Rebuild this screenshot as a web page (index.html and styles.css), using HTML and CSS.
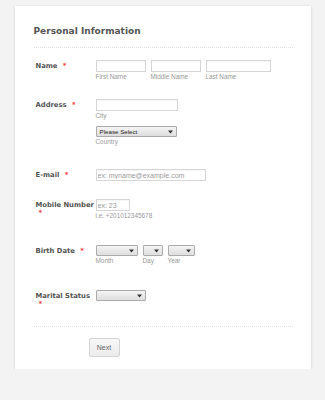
FILE: index.html
```html
<!DOCTYPE html>
<html>
<head>
<meta charset="utf-8">
<link rel="stylesheet" href="styles.css">
</head>
<body>
<div class="card">
  <h1 class="title">Personal Information</h1>
  <div class="sep sep-top"></div>

  <div class="row row-name">
    <div class="label">Name <span class="req">*</span></div>
    <div class="fields">
      <div class="group">
        <input class="input w50" type="text">
        <div class="sub">First Name</div>
      </div>
      <div class="group">
        <input class="input w50" type="text">
        <div class="sub">Middle Name</div>
      </div>
      <div class="group">
        <input class="input w65" type="text">
        <div class="sub">Last Name</div>
      </div>
    </div>
  </div>

  <div class="row row-address">
    <div class="label">Address <span class="req">*</span></div>
    <div class="stack">
      <div class="group">
        <input class="input w82" type="text">
        <div class="sub">City</div>
      </div>
      <div class="group gap-top">
        <div class="select w81"><span class="sel-text">Please Select</span><svg class="arrow" width="5" height="4" viewBox="0 0 5 4"><path d="M0 0.5h5L2.5 3.5z" fill="#333"/></svg></div>
        <div class="sub">Country</div>
      </div>
    </div>
  </div>

  <div class="row row-email">
    <div class="label">E-mail <span class="req">*</span></div>
    <div class="fields">
      <input class="input w110" type="text" placeholder="ex: myname@example.com">
    </div>
  </div>

  <div class="row row-mobile">
    <div class="label">Mobile Number <span class="req">*</span></div>
    <div class="stack">
      <input class="input w34" type="text" placeholder="ex: 23">
      <div class="sub">i.e. +201012345678</div>
    </div>
  </div>

  <div class="row row-birth">
    <div class="label">Birth Date <span class="req">*</span></div>
    <div class="fields">
      <div class="group">
        <div class="select w42"><span class="sel-text"></span><svg class="arrow" width="5" height="4" viewBox="0 0 5 4"><path d="M0 0.5h5L2.5 3.5z" fill="#333"/></svg></div>
        <div class="sub">Month</div>
      </div>
      <div class="group">
        <div class="select w20"><span class="sel-text"></span><svg class="arrow" width="5" height="4" viewBox="0 0 5 4"><path d="M0 0.5h5L2.5 3.5z" fill="#333"/></svg></div>
        <div class="sub">Day</div>
      </div>
      <div class="group">
        <div class="select w27"><span class="sel-text"></span><svg class="arrow" width="5" height="4" viewBox="0 0 5 4"><path d="M0 0.5h5L2.5 3.5z" fill="#333"/></svg></div>
        <div class="sub">Year</div>
      </div>
    </div>
  </div>

  <div class="row row-marital">
    <div class="label">Marital Status <span class="req">*</span></div>
    <div class="fields">
      <div class="select w50"><span class="sel-text"></span><svg class="arrow" width="5" height="4" viewBox="0 0 5 4"><path d="M0 0.5h5L2.5 3.5z" fill="#333"/></svg></div>
    </div>
  </div>

  <div class="sep"></div>
  <div class="actions">
    <button class="btn" type="button">Next</button>
  </div>
</div>
</body>
</html>
```
FILE: styles.css
```css
html, body {
  margin: 0;
  padding: 0;
}
body {
  background: #f3f3f3;
  font-family: "Liberation Sans", Arial, sans-serif;
  padding-top: 6px;
}
.card {
  width: 296px;
  margin: 0 auto;
  box-sizing: border-box;
  background: #fff;
  padding: 18px 18px 12px 19px;
  box-shadow: 0 1px 3px rgba(0, 0, 0, 0.12), 0 0 2px rgba(0, 0, 0, 0.05);
}
.title {
  margin: 0;
  font-family: "DejaVu Sans", Verdana, sans-serif;
  font-size: 9px;
  line-height: 14px;
  font-weight: bold;
  color: #555;
}
.sep {
  height: 0;
  border-top: 1px dotted #e2e2e2;
}
.sep-top { margin-top: 9px; }
.row {
  display: flex;
  align-items: flex-start;
  margin-bottom: 18px;
}
.row-name { margin-top: 12px; margin-bottom: 17px; }
.row-address { margin-bottom: 22px; }
.row-mobile { margin-bottom: 24px; }
.row-birth { margin-bottom: 24px; }
.label {
  width: 60px;
  flex: none;
  padding-left: 2px;
  margin-top: 2px;
  font-family: "DejaVu Sans", Verdana, sans-serif;
  font-size: 6.8px;
  line-height: 8px;
  font-weight: bold;
  color: #555;
}
.req {
  color: #f23a3a;
  margin-left: 3px;
  font-weight: bold;
  font-size: 7px;
}
.fields {
  display: flex;
  gap: 5px;
  align-items: flex-start;
}
.stack {
  display: flex;
  flex-direction: column;
  align-items: flex-start;
}
.group {
  display: flex;
  flex-direction: column;
}
.gap-top { margin-top: 5px; }
.input {
  display: block;
  box-sizing: border-box;
  height: 12px;
  margin: 0;
  padding: 0 0 0 1px;
  border: 1px solid #d6d6d6;
  box-shadow: inset 0 1px 1px rgba(0, 0, 0, 0.04);
  background: #fff;
  font-family: "Liberation Sans", Arial, sans-serif;
  font-size: 7px;
  color: #333;
  outline: none;
}
.input::placeholder { color: #9a9a9a; }
.w20 { width: 20px; }
.w27 { width: 27px; }
.w34 { width: 34px; }
.w42 { width: 42px; }
.w50 { width: 50px; }
.w65 { width: 65px; }
.w81 { width: 81px; }
.w82 { width: 82px; }
.w110 { width: 110px; }
.select {
  box-sizing: border-box;
  height: 11px;
  display: flex;
  align-items: center;
  justify-content: space-between;
  padding: 0 3px 0 3px;
  border: 1px solid #ababab;
  border-radius: 1px;
  background: linear-gradient(#f4f4f4, #dedede);
}
.sel-text {
  font-size: 6.2px;
  color: #222;
  line-height: 9px;
  white-space: nowrap;
}
.arrow { display: block; flex: none; }
.sub {
  font-size: 6.4px;
  line-height: 10px;
  color: #999;
  white-space: nowrap;
}
.actions {
  margin-top: 11px;
  padding-left: 55px;
}
.btn {
  display: block;
  box-sizing: border-box;
  width: 31px;
  height: 19px;
  padding: 0;
  margin: 0;
  border: 1px solid #d4d4d4;
  border-radius: 2px;
  background: linear-gradient(#f7f7f7, #ececec);
  font-family: "Liberation Sans", Arial, sans-serif;
  font-size: 7px;
  color: #666;
}
```
